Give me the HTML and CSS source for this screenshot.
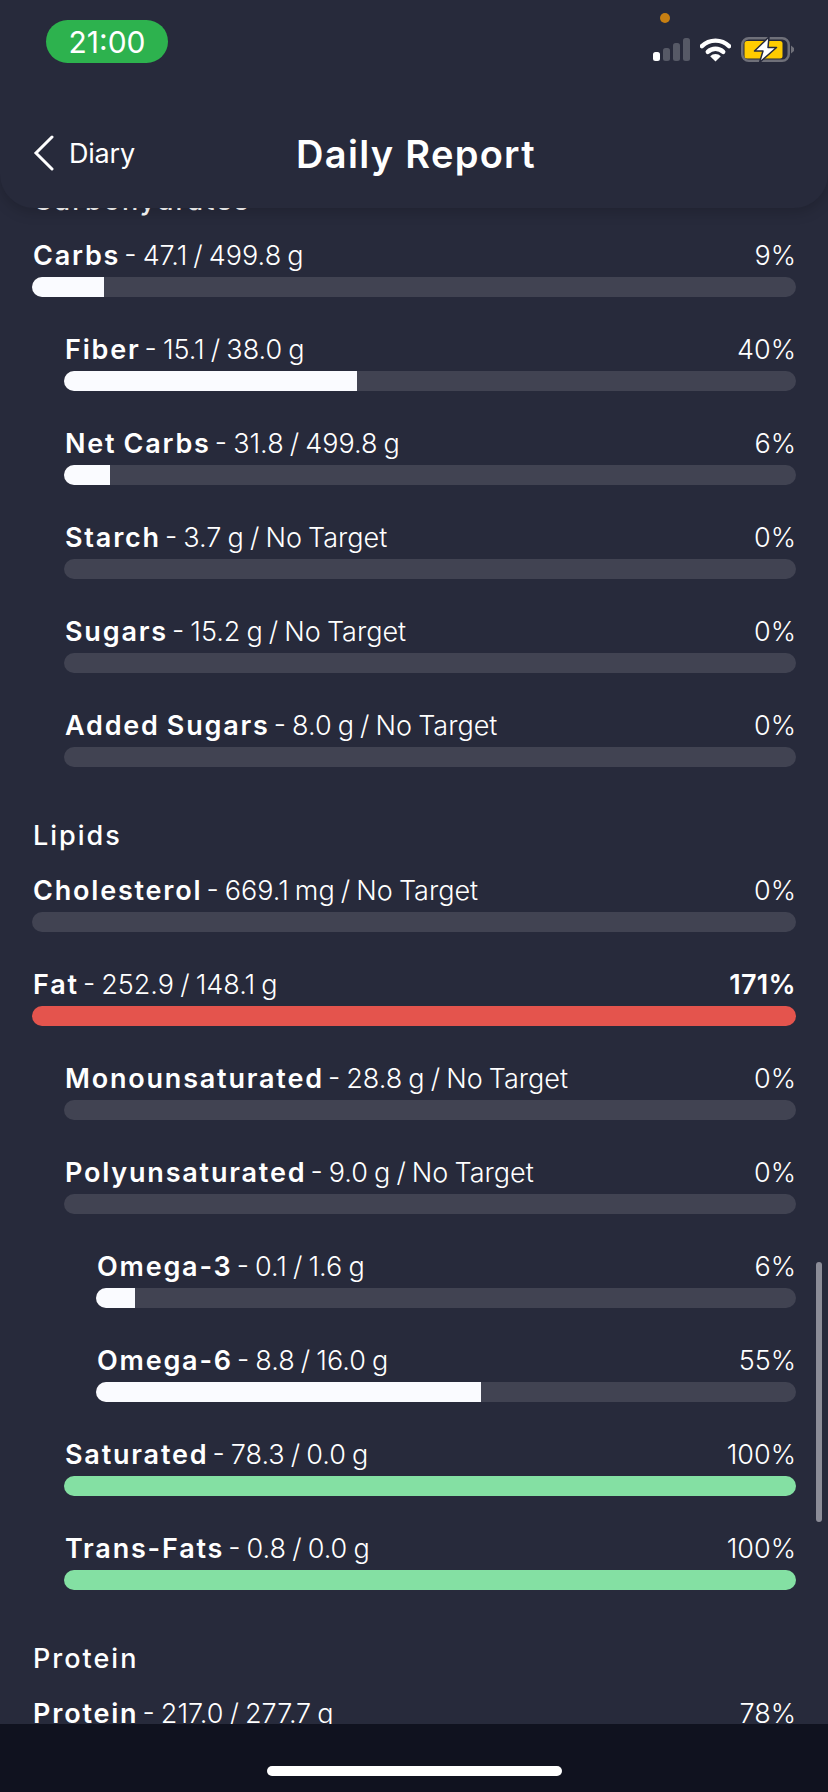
FILE: index.html
```html
<!DOCTYPE html>
<html lang="en">
<head>
    <meta charset="UTF-8">
    <meta name="viewport" content="width=device-width, initial-scale=1.0">
    <title>Daily Report</title>
    <link rel="stylesheet" href="styles.css">
</head>
<body>
    <div class="screen">
        <header class="top-bar">
            <div class="status-bar">
                <div class="clock">21:00</div>
                <div class="status-icons">
                    <span class="mic-dot"></span>
                    <svg class="signal" width="37" height="24" viewBox="0 0 37 24">
                        <rect x="0" y="15" width="7" height="9" rx="2.5" fill="#fff"/>
                        <rect x="10" y="11" width="7" height="13" rx="2.5" fill="#565966"/>
                        <rect x="20" y="6" width="7" height="18" rx="2.5" fill="#565966"/>
                        <rect x="30" y="1" width="7" height="23" rx="2.5" fill="#565966"/>
                    </svg>
                    <svg class="wifi" width="31" height="25" viewBox="0 0 32 25">
                        <path d="M2 9 A20 20 0 0 1 30 9" fill="none" stroke="#fff" stroke-width="4.5" stroke-linecap="round"/>
                        <path d="M8 15 A11.5 11.5 0 0 1 24 15" fill="none" stroke="#fff" stroke-width="4.5" stroke-linecap="round"/>
                        <path d="M16 25 L10.5 19.5 A7.5 7.5 0 0 1 21.5 19.5 Z" fill="#fff"/>
                    </svg>
                    <svg class="battery" width="54" height="26" viewBox="0 0 54 26">
                        <rect x="1.25" y="1.25" width="46.5" height="22.5" rx="6.5" fill="none" stroke="#6f7079" stroke-width="2.5"/>
                        <rect x="3.5" y="4" width="38" height="17.5" rx="2.5" fill="#ffcc00"/>
                        <path d="M50 8.5 L53 11 V14 L50 16.5 Z" fill="#6f7079"/>
                        <path d="M28 0 L13.5 14 H22 L18.5 25.5 L35.5 10.5 H27 Z" fill="#fff" stroke="#272a3b" stroke-width="1.5" stroke-linejoin="round"/>
                    </svg>
                </div>
            </div>
            <div class="nav-bar">
                <div class="back">
                    <svg width="22" height="36" viewBox="0 0 22 36"><path d="M19 2 L3 18 L19 34" fill="none" stroke="#fff" stroke-width="3" stroke-linecap="round"/></svg>
                    <span>Diary</span>
                </div>
                <h1>Daily Report</h1>
            </div>
        </header>

        <div class="report">
            <div class="report-inner">
                <h2>Carbohydrates</h2>
                <div class="nutrient">
                    <div class="nutrient-text"><span><b>Carbs</b> - 47.1 / 499.8 g</span><span>9%</span></div>
                    <div class="track"><div class="fill" style="width: 9.4%"></div></div>
                </div>
                <div class="nutrient sub">
                    <div class="nutrient-text"><span><b>Fiber</b> - 15.1 / 38.0 g</span><span>40%</span></div>
                    <div class="track"><div class="fill" style="width: 40%"></div></div>
                </div>
                <div class="nutrient sub">
                    <div class="nutrient-text"><span><b>Net Carbs</b> - 31.8 / 499.8 g</span><span>6%</span></div>
                    <div class="track"><div class="fill" style="width: 6.3%"></div></div>
                </div>
                <div class="nutrient sub">
                    <div class="nutrient-text"><span><b>Starch</b> - 3.7 g / No Target</span><span>0%</span></div>
                    <div class="track"></div>
                </div>
                <div class="nutrient sub">
                    <div class="nutrient-text"><span><b>Sugars</b> - 15.2 g / No Target</span><span>0%</span></div>
                    <div class="track"></div>
                </div>
                <div class="nutrient sub">
                    <div class="nutrient-text"><span><b>Added Sugars</b> - 8.0 g / No Target</span><span>0%</span></div>
                    <div class="track"></div>
                </div>

                <h2>Lipids</h2>
                <div class="nutrient">
                    <div class="nutrient-text"><span><b>Cholesterol</b> - 669.1 mg / No Target</span><span>0%</span></div>
                    <div class="track"></div>
                </div>
                <div class="nutrient">
                    <div class="nutrient-text"><span><b>Fat</b> - 252.9 / 148.1 g</span><span class="over-pct">171%</span></div>
                    <div class="track"><div class="fill over" style="width: 100%"></div></div>
                </div>
                <div class="nutrient sub">
                    <div class="nutrient-text"><span><b>Monounsaturated</b> - 28.8 g / No Target</span><span>0%</span></div>
                    <div class="track"></div>
                </div>
                <div class="nutrient sub">
                    <div class="nutrient-text"><span><b>Polyunsaturated</b> - 9.0 g / No Target</span><span>0%</span></div>
                    <div class="track"></div>
                </div>
                <div class="nutrient sub-sub">
                    <div class="nutrient-text"><span><b>Omega-3</b> - 0.1 / 1.6 g</span><span>6%</span></div>
                    <div class="track"><div class="fill" style="width: 5.6%"></div></div>
                </div>
                <div class="nutrient sub-sub">
                    <div class="nutrient-text"><span><b>Omega-6</b> - 8.8 / 16.0 g</span><span>55%</span></div>
                    <div class="track"><div class="fill" style="width: 55%"></div></div>
                </div>
                <div class="nutrient sub">
                    <div class="nutrient-text"><span><b>Saturated</b> - 78.3 / 0.0 g</span><span>100%</span></div>
                    <div class="track"><div class="fill good" style="width: 100%"></div></div>
                </div>
                <div class="nutrient sub">
                    <div class="nutrient-text"><span><b>Trans-Fats</b> - 0.8 / 0.0 g</span><span>100%</span></div>
                    <div class="track"><div class="fill good" style="width: 100%"></div></div>
                </div>

                <h2>Protein</h2>
                <div class="nutrient">
                    <div class="nutrient-text"><span><b>Protein</b> - 217.0 / 277.7 g</span><span>78%</span></div>
                    <div class="track"><div class="fill" style="width: 78%"></div></div>
                </div>
            </div>
            <div class="scroll-thumb"></div>
        </div>

        <footer class="home-area"><div class="home-bar"></div></footer>
    </div>
</body>
</html>
```

FILE: styles.css
```css
* {
    box-sizing: border-box;
}
html, body {
    margin: 0;
    height: 100%;
}
body {
    font-family: Inter, "Noto Sans", sans-serif;
    background-color: #272a3b;
    color: #fff;
    overflow: hidden;
}
.screen {
    display: flex;
    flex-direction: column;
    height: 1792px;
}
.top-bar {
    position: relative;
    z-index: 2;
    height: 208px;
    flex-shrink: 0;
    background-color: #272a3b;
    border-radius: 0 0 34px 34px;
    box-shadow: 0 4px 14px rgba(0,0,0,0.18);
}
.status-bar {
    display: flex;
    justify-content: space-between;
    align-items: flex-start;
    padding: 20px 33px 0 46px;
}
.clock {
    width: 122px;
    height: 43px;
    line-height: 45px;
    text-align: center;
    font-size: 30px;
    font-weight: 400;
    background-color: #2db24e;
    border-radius: 22px;
}
.status-icons {
    position: relative;
    display: flex;
    align-items: flex-start;
    gap: 10px;
    padding-top: 17px;
}
.mic-dot {
    position: absolute;
    left: 7px;
    top: -7px;
    width: 10px;
    height: 10px;
    border-radius: 50%;
    background-color: #c77f12;
}
.nav-bar {
    position: relative;
    display: flex;
    justify-content: center;
    align-items: center;
    height: 60px;
    margin-top: 61px;
    padding-left: 4px;
}
.nav-bar h1 {
    margin: 0;
    font-size: 38px;
    font-weight: 600;
    letter-spacing: 1.3px;
}
.back {
    position: absolute;
    left: 33px;
    top: 11px;
    display: flex;
    align-items: center;
    gap: 14px;
    font-size: 27px;
    font-weight: 400;
    letter-spacing: -0.2px;
}
.report {
    position: relative;
    flex: 1;
    overflow: hidden;
}
.report-inner {
    margin-top: -76px;
    padding: 0 32px;
}
h2 {
    margin: 0;
    height: 71px;
    padding-top: 48px;
    padding-left: 1px;
    font-size: 27px;
    line-height: 42px;
    font-weight: 500;
    letter-spacing: 2px;
}
.nutrient {
    padding-top: 32px;
}
.nutrient.sub {
    padding-left: 32px;
}
.nutrient.sub-sub {
    padding-left: 64px;
}
.nutrient-text {
    display: flex;
    justify-content: space-between;
    height: 42px;
    line-height: 42px;
    padding-left: 1px;
    font-size: 27px;
    font-weight: 300;
    word-spacing: -1.5px;
}
.nutrient-text b {
    margin-right: -2px;
    font-weight: 600;
    letter-spacing: 1.8px;
}
.over-pct {
    font-weight: 600;
    letter-spacing: 0.3px;
}
.track {
    height: 20px;
    border-radius: 10px;
    background-color: #414352;
    overflow: hidden;
}
.fill {
    height: 100%;
    background-color: #fafbff;
}
.fill.over {
    background-color: #e4544d;
}
.fill.good {
    background-color: #84e0a3;
}
.scroll-thumb {
    position: absolute;
    right: 6px;
    top: 1054px;
    width: 6px;
    height: 260px;
    border-radius: 3px;
    background-color: #8b8c97;
}
.home-area {
    height: 68px;
    flex-shrink: 0;
    display: flex;
    justify-content: center;
    padding-top: 42px;
    background-color: #10121f;
}
.home-bar {
    width: 295px;
    height: 10px;
    border-radius: 5px;
    background-color: #fff;
}
```
